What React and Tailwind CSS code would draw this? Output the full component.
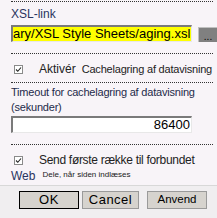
import React from "react";

function Check() {
  return (
    <div className="w-[9px] h-[9px] border border-[#8a8a8a] bg-white flex items-center justify-center">
      <svg width="7" height="7" viewBox="0 0 7 7">
        <path d="M1 3.5 L2.8 5.3 L6 1.5" stroke="#222" strokeWidth="1.1" fill="none" />
      </svg>
    </div>
  );
}

function Dots({ className = "" }) {
  return <div className={"border-t border-dotted border-[#333] ml-[11px] mr-[4px] " + className} />;
}

const ls = { fontFamily: "'Liberation Sans', Arial, sans-serif" };

export default function App() {
  return (
    <div
      className="w-[217px] h-[218px] bg-[#f8f4f8] overflow-hidden flex flex-col text-[#222]"
      style={ls}
    >
      <Dots className="mt-[1px]" />
      <div className="ml-[11px] mt-[6px] text-[12px] leading-[13px] text-[#2a3560]">
        XSL-link
      </div>
      <div className="flex items-end mt-[4px] h-[17px]">
        <div className="ml-[11px] w-[181px] h-[17px] bg-[#ffff00] border-t-2 border-l-2 border-[#7a7a7a] border-r border-b border-r-[#e8e8e8] border-b-[#e8e8e8] overflow-hidden flex items-center">
          <span className="whitespace-nowrap text-[13px] leading-[14px] text-black">
            ary/XSL Style Sheets/aging.xsl
          </span>
          <span className="w-[1px] h-[13px] bg-black ml-[1px] shrink-0" />
        </div>
        <div className="ml-[6px] w-[19px] h-[15px] bg-[#808080] border-t border-l border-[#c0c0c0] flex items-end justify-center text-[10px] leading-[10px] text-black">
          ...
        </div>
      </div>
      <Dots className="mt-[11px]" />
      <div className="flex items-center mt-[9px] h-[12px]">
        <div className="ml-[14px]"><Check /></div>
        <span className="ml-[16px] text-[12px] leading-[12px]">Aktivér</span>
        <span className="ml-[6px] text-[11px] leading-[12px] tracking-[-0.2px]">Cachelagring af datavisning</span>
      </div>
      <Dots className="mt-[7px]" />
      <div className="ml-[11px] mt-[2px] text-[11px] leading-[15px] tracking-[-0.2px] text-[#1e2a4a]">
        Timeout for cachelagring af datavisning
        <br />
        (sekunder)
      </div>
      <div className="ml-[11px] mt-[1px] w-[181px] h-[17px] bg-white border-t-2 border-l-2 border-[#7a7a7a] border-r border-b border-r-[#e8e8e8] border-b-[#e8e8e8] flex items-center justify-end pr-[1px] text-[13px] text-black">
        86400
      </div>
      <Dots className="mt-[11px]" />
      <div className="flex items-center mt-[9px] h-[12px]">
        <div className="ml-[14px]"><Check /></div>
        <span className="ml-[16px] text-[12px] leading-[12px] tracking-[-0.3px]">Send første række til forbundet</span>
      </div>
      <div className="flex items-end mt-[4px] h-[12px]">
        <span className="ml-[11px] text-[12px] leading-[12px] text-[#2a3560]">Web</span>
        <span className="ml-[7px] text-[8px] leading-[10px] mb-[2px]">Dele, når siden indlæses</span>
      </div>
      <div className="mt-[3px] flex-1 bg-[#f0eef0] border-t border-[#d8d8d8] flex items-start">
        <div className="flex mt-[5px] ml-[19px] gap-[3px]">
          <div className="w-[60px] h-[18px] bg-[#d6d3ce] border border-black flex items-center justify-center text-[13px] text-black tracking-[0.5px]">OK</div>
          <div className="w-[57px] h-[18px] bg-[#d6d3ce] border border-[#9a9a9a] flex items-center justify-center text-[13px] text-black tracking-[0.5px]">Cancel</div>
          <div className="ml-[5px] w-[60px] h-[18px] bg-[#d6d3ce] border border-[#9a9a9a] flex items-center justify-center text-[11.5px] text-black">Anvend</div>
        </div>
      </div>
    </div>
  );
}
